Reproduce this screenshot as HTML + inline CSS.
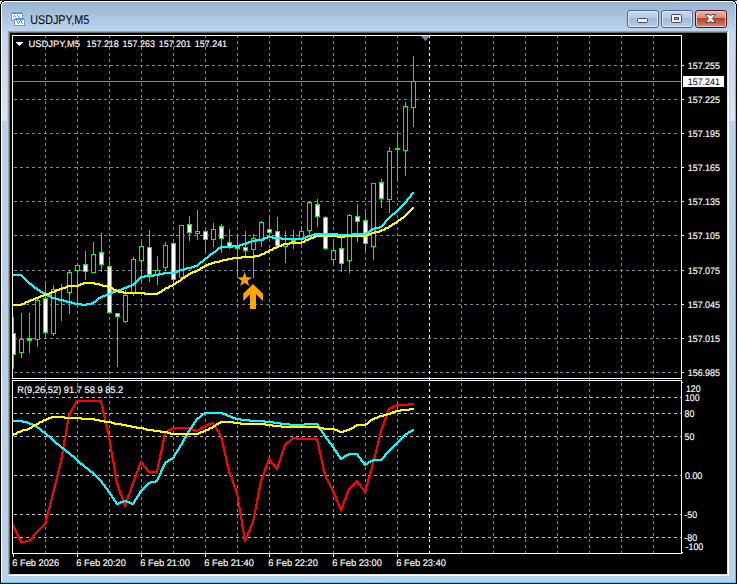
<!DOCTYPE html>
<html lang="en"><head><meta charset="utf-8"><title>USDJPY,M5</title>
<style>html,body{margin:0;padding:0;background:#fff;overflow:hidden}svg{display:block}text{font-family:"Liberation Sans", sans-serif;white-space:pre;text-rendering:geometricPrecision}</style></head><body>
<svg width="739" height="584" viewBox="0 0 739 584">
<defs><linearGradient id="cap" x1="0" y1="0" x2="0" y2="1"><stop offset="0" stop-color="#98b3d1"/><stop offset="1" stop-color="#bdd5ee"/></linearGradient><linearGradient id="side" x1="0" y1="0" x2="0" y2="1"><stop offset="0" stop-color="#c2d7ee"/><stop offset="1" stop-color="#d8e5f4"/></linearGradient><linearGradient id="btnT" x1="0" y1="0" x2="0" y2="1"><stop offset="0" stop-color="#c3d5ea"/><stop offset="1" stop-color="#b7cce5"/></linearGradient><linearGradient id="btnB" x1="0" y1="0" x2="0" y2="1"><stop offset="0" stop-color="#9fb9d7"/><stop offset="1" stop-color="#b4cbe6"/></linearGradient><linearGradient id="clsT" x1="0" y1="0" x2="0" y2="1"><stop offset="0" stop-color="#eaaea1"/><stop offset="1" stop-color="#dc8a79"/></linearGradient><linearGradient id="clsB" x1="0" y1="0" x2="0" y2="1"><stop offset="0" stop-color="#bd3a1e"/><stop offset="1" stop-color="#d4806b"/></linearGradient><linearGradient id="cyl" x1="0" y1="0" x2="0" y2="1"><stop offset="0" stop-color="#c4ecf9"/><stop offset="1" stop-color="#38d4f6"/></linearGradient></defs>
<g shape-rendering="crispEdges">
<rect x="0" y="0" width="737" height="584" fill="#000"/>
<rect x="1" y="1" width="735" height="582" fill="#b9d1ea"/>
<rect x="1" y="1" width="735" height="1" fill="#fff"/>
<rect x="1" y="1" width="1" height="582" fill="#fff"/>
<rect x="735" y="2" width="1" height="581" fill="#38d4f6"/>
<rect x="735" y="4" width="1" height="60" fill="url(#cyl)"/>
<rect x="1" y="582" width="735" height="1" fill="#38d4f6"/>
<rect x="2" y="2" width="733" height="29" fill="url(#cap)"/>
<rect x="2" y="31" width="5" height="90" fill="url(#side)"/>
<rect x="730" y="31" width="5" height="90" fill="url(#side)"/>
<rect x="8" y="31" width="721" height="545" fill="#fff"/>
<rect x="8" y="31" width="720" height="544" fill="#a0a0a0"/>
<rect x="9" y="32" width="719" height="543" fill="#e3e3e3"/>
<rect x="9" y="32" width="718" height="542" fill="#696969"/>
<rect x="10" y="33" width="717" height="541" fill="#000"/>
</g>
<g shape-rendering="crispEdges">
<rect x="0" y="0" width="4" height="1" fill="#2e2e2e"/>
<rect x="0" y="1" width="2" height="1" fill="#e9f0f7"/>
<rect x="2" y="1" width="2" height="1" fill="#101418"/>
<rect x="0" y="2" width="1" height="2" fill="#e9f0f7"/>
<rect x="1" y="2" width="1" height="2" fill="#101418"/>
<rect x="2" y="2" width="2" height="1" fill="#fff"/>
<rect x="2" y="3" width="1" height="1" fill="#fff"/>
<rect x="733" y="0" width="4" height="1" fill="#2e2e2e"/>
<rect x="735" y="1" width="2" height="1" fill="#f4f4f4"/>
<rect x="733" y="1" width="2" height="1" fill="#101418"/>
<rect x="736" y="2" width="1" height="2" fill="#f4f4f4"/>
<rect x="735" y="2" width="1" height="2" fill="#101418"/>
<rect x="733" y="2" width="2" height="1" fill="#d9eef8"/>
<rect x="734" y="3" width="1" height="1" fill="#bfe9f8"/>
</g>
<g shape-rendering="crispEdges">
<rect x="11" y="12" width="12" height="9" fill="#4a86f5"/>
<rect x="12" y="14" width="10" height="6" fill="#fff"/>
<rect x="11" y="12" width="1" height="1" fill="#a9c3e2"/>
<rect x="22" y="12" width="1" height="1" fill="#a9c3e2"/>
<rect x="12" y="12" width="1" height="1" fill="#7fb2f7"/>
<rect x="12" y="20" width="1" height="1" fill="#7fb2f7"/>
<rect x="14" y="12" width="1" height="1" fill="#7fb2f7"/>
<rect x="14" y="20" width="1" height="1" fill="#7fb2f7"/>
<rect x="16" y="12" width="1" height="1" fill="#7fb2f7"/>
<rect x="16" y="20" width="1" height="1" fill="#7fb2f7"/>
<rect x="18" y="12" width="1" height="1" fill="#7fb2f7"/>
<rect x="18" y="20" width="1" height="1" fill="#7fb2f7"/>
<rect x="20" y="12" width="1" height="1" fill="#7fb2f7"/>
<rect x="20" y="20" width="1" height="1" fill="#7fb2f7"/>
<rect x="13" y="13" width="1" height="1" fill="#4fae86"/>
<rect x="16" y="13" width="1" height="1" fill="#4fae86"/>
<rect x="19" y="13" width="1" height="1" fill="#4fae86"/>
<rect x="11" y="14" width="1" height="1" fill="#7fb2f7"/>
<rect x="22" y="14" width="1" height="1" fill="#7fb2f7"/>
<rect x="11" y="16" width="1" height="1" fill="#7fb2f7"/>
<rect x="22" y="16" width="1" height="1" fill="#7fb2f7"/>
<rect x="11" y="18" width="1" height="1" fill="#7fb2f7"/>
<rect x="22" y="18" width="1" height="1" fill="#7fb2f7"/>
<rect x="13" y="16" width="1" height="1" fill="#4a86f5"/>
<rect x="14" y="15" width="1" height="1" fill="#4a86f5"/>
<rect x="15" y="16" width="1" height="1" fill="#4a86f5"/>
<rect x="17" y="15" width="1" height="1" fill="#4a86f5"/>
<rect x="18" y="16" width="1" height="1" fill="#4a86f5"/>
<rect x="19" y="17" width="1" height="1" fill="#4a86f5"/>
<rect x="14" y="18" width="11" height="8" fill="#4a86f5"/>
<rect x="15" y="20" width="9" height="5" fill="#fff"/>
<rect x="14" y="18" width="1" height="1" fill="#a9c3e2"/>
<rect x="24" y="18" width="1" height="1" fill="#a9c3e2"/>
<rect x="15" y="18" width="1" height="1" fill="#7fb2f7"/>
<rect x="15" y="25" width="1" height="1" fill="#7fb2f7"/>
<rect x="17" y="18" width="1" height="1" fill="#7fb2f7"/>
<rect x="17" y="25" width="1" height="1" fill="#7fb2f7"/>
<rect x="19" y="18" width="1" height="1" fill="#7fb2f7"/>
<rect x="19" y="25" width="1" height="1" fill="#7fb2f7"/>
<rect x="21" y="18" width="1" height="1" fill="#7fb2f7"/>
<rect x="21" y="25" width="1" height="1" fill="#7fb2f7"/>
<rect x="23" y="18" width="1" height="1" fill="#7fb2f7"/>
<rect x="23" y="25" width="1" height="1" fill="#7fb2f7"/>
<rect x="16" y="19" width="1" height="1" fill="#4fae86"/>
<rect x="19" y="19" width="1" height="1" fill="#4fae86"/>
<rect x="22" y="19" width="1" height="1" fill="#4fae86"/>
<rect x="14" y="20" width="1" height="1" fill="#7fb2f7"/>
<rect x="24" y="20" width="1" height="1" fill="#7fb2f7"/>
<rect x="14" y="22" width="1" height="1" fill="#7fb2f7"/>
<rect x="24" y="22" width="1" height="1" fill="#7fb2f7"/>
<rect x="14" y="24" width="1" height="1" fill="#7fb2f7"/>
<rect x="24" y="24" width="1" height="1" fill="#7fb2f7"/>
<rect x="16" y="20" width="1" height="1" fill="#4a86f5"/>
<rect x="17" y="21" width="1" height="1" fill="#4a86f5"/>
<rect x="17" y="22" width="1" height="1" fill="#4a86f5"/>
<rect x="18" y="23" width="1" height="1" fill="#4a86f5"/>
<rect x="19" y="22" width="1" height="1" fill="#4a86f5"/>
<rect x="19" y="21" width="1" height="1" fill="#4a86f5"/>
<rect x="20" y="20" width="1" height="1" fill="#4a86f5"/>
<rect x="21" y="21" width="1" height="1" fill="#4a86f5"/>
<rect x="21" y="22" width="1" height="1" fill="#4a86f5"/>
<rect x="22" y="23" width="1" height="1" fill="#4a86f5"/>
</g>
<text x="30.2" y="24" font-size="12.6" fill="#000" textLength="59" lengthAdjust="spacingAndGlyphs">USDJPY,M5</text>
<rect x="627.5" y="10.5" width="31" height="17" rx="2.5" ry="2.5" fill="#dbe7f5" stroke="#56657f" stroke-width="1"/>
<rect x="629" y="12" width="28" height="6" fill="url(#btnT)" shape-rendering="crispEdges"/>
<rect x="629" y="18" width="28" height="8" fill="url(#btnB)" shape-rendering="crispEdges"/>
<rect x="661.5" y="10.5" width="31" height="17" rx="2.5" ry="2.5" fill="#dbe7f5" stroke="#56657f" stroke-width="1"/>
<rect x="663" y="12" width="28" height="6" fill="url(#btnT)" shape-rendering="crispEdges"/>
<rect x="663" y="18" width="28" height="8" fill="url(#btnB)" shape-rendering="crispEdges"/>
<rect x="695.5" y="10.5" width="31" height="17" rx="2.5" ry="2.5" fill="#f3c6bd" stroke="#4b1526" stroke-width="1"/>
<rect x="697" y="12" width="28" height="6" fill="url(#clsT)" shape-rendering="crispEdges"/>
<rect x="697" y="18" width="28" height="8" fill="url(#clsB)" shape-rendering="crispEdges"/>
<rect x="637.5" y="18.5" width="10" height="4" rx="1" fill="#f4f4f4" stroke="#48495a" stroke-width="1"/>
<rect x="671.5" y="14.5" width="10" height="8" rx="1" fill="#f4f4f4" stroke="#48495a" stroke-width="1"/>
<rect x="674.5" y="17.5" width="4" height="2" fill="#9fb9d7" stroke="#48495a" stroke-width="1"/>
<path d="M705.5 14.5h4l1 1.6 1-1.6h4l-3.1 4 3.1 4h-4l-1-1.6-1 1.6h-4l3.1-4z" fill="#f8f8f8" stroke="#48495a" stroke-width="1" stroke-linejoin="round"/>
<g shape-rendering="crispEdges">
<line x1="13" y1="65.5" x2="679" y2="65.5" stroke="#778899" stroke-width="1" stroke-dasharray="3 3" stroke-dashoffset="5"/>
<line x1="13" y1="99.5" x2="679" y2="99.5" stroke="#778899" stroke-width="1" stroke-dasharray="3 3" stroke-dashoffset="5"/>
<line x1="13" y1="133.5" x2="679" y2="133.5" stroke="#778899" stroke-width="1" stroke-dasharray="3 3" stroke-dashoffset="5"/>
<line x1="13" y1="167.5" x2="679" y2="167.5" stroke="#778899" stroke-width="1" stroke-dasharray="3 3" stroke-dashoffset="5"/>
<line x1="13" y1="201.5" x2="679" y2="201.5" stroke="#778899" stroke-width="1" stroke-dasharray="3 3" stroke-dashoffset="5"/>
<line x1="13" y1="235.5" x2="679" y2="235.5" stroke="#778899" stroke-width="1" stroke-dasharray="3 3" stroke-dashoffset="5"/>
<line x1="13" y1="270.5" x2="679" y2="270.5" stroke="#778899" stroke-width="1" stroke-dasharray="3 3" stroke-dashoffset="5"/>
<line x1="13" y1="304.5" x2="679" y2="304.5" stroke="#778899" stroke-width="1" stroke-dasharray="3 3" stroke-dashoffset="5"/>
<line x1="13" y1="338.5" x2="679" y2="338.5" stroke="#778899" stroke-width="1" stroke-dasharray="3 3" stroke-dashoffset="5"/>
<line x1="13" y1="372.5" x2="679" y2="372.5" stroke="#778899" stroke-width="1" stroke-dasharray="3 3" stroke-dashoffset="5"/>
<line x1="13" y1="397.5" x2="681" y2="397.5" stroke="#c0c0c0" stroke-width="1" stroke-dasharray="3 3" stroke-dashoffset="5"/>
<line x1="13" y1="413.5" x2="681" y2="413.5" stroke="#c0c0c0" stroke-width="1" stroke-dasharray="3 3" stroke-dashoffset="5"/>
<line x1="13" y1="436.5" x2="681" y2="436.5" stroke="#c0c0c0" stroke-width="1" stroke-dasharray="3 3" stroke-dashoffset="5"/>
<line x1="13" y1="475.5" x2="681" y2="475.5" stroke="#c0c0c0" stroke-width="1" stroke-dasharray="3 3" stroke-dashoffset="5"/>
<line x1="13" y1="514.5" x2="681" y2="514.5" stroke="#c0c0c0" stroke-width="1" stroke-dasharray="3 3" stroke-dashoffset="5"/>
<line x1="13" y1="537.5" x2="681" y2="537.5" stroke="#c0c0c0" stroke-width="1" stroke-dasharray="3 3" stroke-dashoffset="5"/>
<rect x="12" y="35" width="670" height="1" fill="#fff"/>
<rect x="12" y="378" width="670" height="1" fill="#fff"/>
<rect x="12" y="35" width="1" height="344" fill="#fff"/>
<rect x="681" y="35" width="1" height="344" fill="#fff"/>
<rect x="12" y="380" width="670" height="1" fill="#fff"/>
<rect x="12" y="553" width="670" height="1" fill="#fff"/>
<rect x="12" y="380" width="1" height="174" fill="#fff"/>
<rect x="681" y="380" width="1" height="174" fill="#fff"/>
<line x1="45.5" y1="36" x2="45.5" y2="380" stroke="#778899" stroke-width="1" stroke-dasharray="3 3" stroke-dashoffset="1"/>
<line x1="45.5" y1="381" x2="45.5" y2="553" stroke="#778899" stroke-width="1" stroke-dasharray="3 3" stroke-dashoffset="4"/>
<line x1="77.5" y1="36" x2="77.5" y2="380" stroke="#778899" stroke-width="1" stroke-dasharray="3 3" stroke-dashoffset="1"/>
<line x1="77.5" y1="381" x2="77.5" y2="553" stroke="#778899" stroke-width="1" stroke-dasharray="3 3" stroke-dashoffset="4"/>
<line x1="109.5" y1="36" x2="109.5" y2="380" stroke="#778899" stroke-width="1" stroke-dasharray="3 3" stroke-dashoffset="1"/>
<line x1="109.5" y1="381" x2="109.5" y2="553" stroke="#778899" stroke-width="1" stroke-dasharray="3 3" stroke-dashoffset="4"/>
<line x1="141.5" y1="36" x2="141.5" y2="380" stroke="#778899" stroke-width="1" stroke-dasharray="3 3" stroke-dashoffset="1"/>
<line x1="141.5" y1="381" x2="141.5" y2="553" stroke="#778899" stroke-width="1" stroke-dasharray="3 3" stroke-dashoffset="4"/>
<line x1="173.5" y1="36" x2="173.5" y2="380" stroke="#778899" stroke-width="1" stroke-dasharray="3 3" stroke-dashoffset="1"/>
<line x1="173.5" y1="381" x2="173.5" y2="553" stroke="#778899" stroke-width="1" stroke-dasharray="3 3" stroke-dashoffset="4"/>
<line x1="205.5" y1="36" x2="205.5" y2="380" stroke="#778899" stroke-width="1" stroke-dasharray="3 3" stroke-dashoffset="1"/>
<line x1="205.5" y1="381" x2="205.5" y2="553" stroke="#778899" stroke-width="1" stroke-dasharray="3 3" stroke-dashoffset="4"/>
<line x1="237.5" y1="36" x2="237.5" y2="380" stroke="#778899" stroke-width="1" stroke-dasharray="3 3" stroke-dashoffset="1"/>
<line x1="237.5" y1="381" x2="237.5" y2="553" stroke="#778899" stroke-width="1" stroke-dasharray="3 3" stroke-dashoffset="4"/>
<line x1="269.5" y1="36" x2="269.5" y2="380" stroke="#778899" stroke-width="1" stroke-dasharray="3 3" stroke-dashoffset="1"/>
<line x1="269.5" y1="381" x2="269.5" y2="553" stroke="#778899" stroke-width="1" stroke-dasharray="3 3" stroke-dashoffset="4"/>
<line x1="301.5" y1="36" x2="301.5" y2="380" stroke="#778899" stroke-width="1" stroke-dasharray="3 3" stroke-dashoffset="1"/>
<line x1="301.5" y1="381" x2="301.5" y2="553" stroke="#778899" stroke-width="1" stroke-dasharray="3 3" stroke-dashoffset="4"/>
<line x1="333.5" y1="36" x2="333.5" y2="380" stroke="#778899" stroke-width="1" stroke-dasharray="3 3" stroke-dashoffset="1"/>
<line x1="333.5" y1="381" x2="333.5" y2="553" stroke="#778899" stroke-width="1" stroke-dasharray="3 3" stroke-dashoffset="4"/>
<line x1="365.5" y1="36" x2="365.5" y2="380" stroke="#778899" stroke-width="1" stroke-dasharray="3 3" stroke-dashoffset="1"/>
<line x1="365.5" y1="381" x2="365.5" y2="553" stroke="#778899" stroke-width="1" stroke-dasharray="3 3" stroke-dashoffset="4"/>
<line x1="397.5" y1="36" x2="397.5" y2="380" stroke="#778899" stroke-width="1" stroke-dasharray="3 3" stroke-dashoffset="1"/>
<line x1="397.5" y1="381" x2="397.5" y2="553" stroke="#778899" stroke-width="1" stroke-dasharray="3 3" stroke-dashoffset="4"/>
<line x1="429.5" y1="36" x2="429.5" y2="380" stroke="#fff" stroke-width="1" stroke-dasharray="3 3" stroke-dashoffset="1"/>
<line x1="429.5" y1="381" x2="429.5" y2="553" stroke="#fff" stroke-width="1" stroke-dasharray="3 3" stroke-dashoffset="4"/>
<line x1="461.5" y1="36" x2="461.5" y2="380" stroke="#778899" stroke-width="1" stroke-dasharray="3 3" stroke-dashoffset="1"/>
<line x1="461.5" y1="381" x2="461.5" y2="553" stroke="#778899" stroke-width="1" stroke-dasharray="3 3" stroke-dashoffset="4"/>
<line x1="493.5" y1="36" x2="493.5" y2="380" stroke="#778899" stroke-width="1" stroke-dasharray="3 3" stroke-dashoffset="1"/>
<line x1="493.5" y1="381" x2="493.5" y2="553" stroke="#778899" stroke-width="1" stroke-dasharray="3 3" stroke-dashoffset="4"/>
<line x1="525.5" y1="36" x2="525.5" y2="380" stroke="#778899" stroke-width="1" stroke-dasharray="3 3" stroke-dashoffset="1"/>
<line x1="525.5" y1="381" x2="525.5" y2="553" stroke="#778899" stroke-width="1" stroke-dasharray="3 3" stroke-dashoffset="4"/>
<line x1="557.5" y1="36" x2="557.5" y2="380" stroke="#778899" stroke-width="1" stroke-dasharray="3 3" stroke-dashoffset="1"/>
<line x1="557.5" y1="381" x2="557.5" y2="553" stroke="#778899" stroke-width="1" stroke-dasharray="3 3" stroke-dashoffset="4"/>
<line x1="589.5" y1="36" x2="589.5" y2="380" stroke="#778899" stroke-width="1" stroke-dasharray="3 3" stroke-dashoffset="1"/>
<line x1="589.5" y1="381" x2="589.5" y2="553" stroke="#778899" stroke-width="1" stroke-dasharray="3 3" stroke-dashoffset="4"/>
<line x1="621.5" y1="36" x2="621.5" y2="380" stroke="#778899" stroke-width="1" stroke-dasharray="3 3" stroke-dashoffset="1"/>
<line x1="621.5" y1="381" x2="621.5" y2="553" stroke="#778899" stroke-width="1" stroke-dasharray="3 3" stroke-dashoffset="4"/>
<line x1="653.5" y1="36" x2="653.5" y2="380" stroke="#778899" stroke-width="1" stroke-dasharray="3 3" stroke-dashoffset="1"/>
<line x1="653.5" y1="381" x2="653.5" y2="553" stroke="#778899" stroke-width="1" stroke-dasharray="3 3" stroke-dashoffset="4"/>
<rect x="13" y="81" width="668" height="1" fill="#7b8a9b"/>
<rect x="682" y="65" width="2" height="1" fill="#fff"/>
<rect x="682" y="99" width="2" height="1" fill="#fff"/>
<rect x="682" y="133" width="2" height="1" fill="#fff"/>
<rect x="682" y="167" width="2" height="1" fill="#fff"/>
<rect x="682" y="201" width="2" height="1" fill="#fff"/>
<rect x="682" y="235" width="2" height="1" fill="#fff"/>
<rect x="682" y="270" width="2" height="1" fill="#fff"/>
<rect x="682" y="304" width="2" height="1" fill="#fff"/>
<rect x="682" y="338" width="2" height="1" fill="#fff"/>
<rect x="682" y="372" width="2" height="1" fill="#fff"/>
<rect x="682" y="382" width="1" height="1" fill="#fff"/>
<rect x="682" y="552" width="1" height="1" fill="#fff"/>
<rect x="13" y="554" width="1" height="3" fill="#fff"/>
<rect x="77" y="554" width="1" height="3" fill="#fff"/>
<rect x="141" y="554" width="1" height="3" fill="#fff"/>
<rect x="205" y="554" width="1" height="3" fill="#fff"/>
<rect x="269" y="554" width="1" height="3" fill="#fff"/>
<rect x="333" y="554" width="1" height="3" fill="#fff"/>
<rect x="397" y="554" width="1" height="3" fill="#fff"/>
</g>
<path d="M421 36h9l-4.5 5z" fill="#778899"/>
<g shape-rendering="crispEdges">
<rect x="13" y="317" width="1" height="52" fill="#00ff00"/>
<rect x="13" y="333" width="3" height="22" fill="#00ff00"/>
<rect x="13" y="334" width="2" height="20" fill="#fff"/>
<rect x="21" y="313" width="1" height="45" fill="#00ff00"/>
<rect x="19" y="339" width="5" height="14" fill="#00ff00"/>
<rect x="20" y="340" width="3" height="12" fill="#000"/>
<rect x="29" y="313" width="1" height="40" fill="#00ff00"/>
<rect x="27" y="338" width="5" height="3" fill="#00ff00"/>
<rect x="28" y="339" width="3" height="1" fill="#fff"/>
<rect x="37" y="299" width="1" height="48" fill="#00ff00"/>
<rect x="35" y="300" width="5" height="40" fill="#00ff00"/>
<rect x="36" y="301" width="3" height="38" fill="#000"/>
<rect x="45" y="284" width="1" height="51" fill="#00ff00"/>
<rect x="43" y="298" width="5" height="35" fill="#00ff00"/>
<rect x="44" y="299" width="3" height="33" fill="#fff"/>
<rect x="53" y="285" width="1" height="51" fill="#00ff00"/>
<rect x="51" y="289" width="5" height="45" fill="#00ff00"/>
<rect x="52" y="290" width="3" height="43" fill="#000"/>
<rect x="61" y="284" width="1" height="37" fill="#00ff00"/>
<rect x="69" y="271" width="1" height="43" fill="#00ff00"/>
<rect x="67" y="272" width="5" height="21" fill="#00ff00"/>
<rect x="68" y="273" width="3" height="19" fill="#000"/>
<rect x="77" y="263" width="1" height="42" fill="#00ff00"/>
<rect x="75" y="265" width="5" height="6" fill="#00ff00"/>
<rect x="76" y="266" width="3" height="4" fill="#000"/>
<rect x="85" y="251" width="1" height="29" fill="#00ff00"/>
<rect x="83" y="264" width="5" height="8" fill="#00ff00"/>
<rect x="84" y="265" width="3" height="6" fill="#fff"/>
<rect x="93" y="242" width="1" height="31" fill="#00ff00"/>
<rect x="91" y="254" width="5" height="19" fill="#00ff00"/>
<rect x="92" y="255" width="3" height="17" fill="#000"/>
<rect x="101" y="233" width="1" height="39" fill="#00ff00"/>
<rect x="99" y="252" width="5" height="13" fill="#00ff00"/>
<rect x="100" y="253" width="3" height="11" fill="#fff"/>
<rect x="109" y="257" width="1" height="56" fill="#00ff00"/>
<rect x="107" y="266" width="5" height="47" fill="#00ff00"/>
<rect x="108" y="267" width="3" height="45" fill="#fff"/>
<rect x="117" y="313" width="1" height="54" fill="#00ff00"/>
<rect x="115" y="313" width="5" height="4" fill="#00ff00"/>
<rect x="116" y="314" width="3" height="2" fill="#fff"/>
<rect x="125" y="290" width="1" height="33" fill="#00ff00"/>
<rect x="123" y="295" width="5" height="27" fill="#00ff00"/>
<rect x="124" y="296" width="3" height="25" fill="#000"/>
<rect x="133" y="257" width="1" height="39" fill="#00ff00"/>
<rect x="131" y="259" width="5" height="35" fill="#00ff00"/>
<rect x="132" y="260" width="3" height="33" fill="#000"/>
<rect x="141" y="242" width="1" height="40" fill="#00ff00"/>
<rect x="139" y="246" width="5" height="15" fill="#00ff00"/>
<rect x="140" y="247" width="3" height="13" fill="#000"/>
<rect x="149" y="230" width="1" height="52" fill="#00ff00"/>
<rect x="147" y="247" width="5" height="28" fill="#00ff00"/>
<rect x="148" y="248" width="3" height="26" fill="#fff"/>
<rect x="157" y="256" width="1" height="29" fill="#00ff00"/>
<rect x="155" y="270" width="5" height="6" fill="#00ff00"/>
<rect x="156" y="271" width="3" height="4" fill="#000"/>
<rect x="165" y="242" width="1" height="28" fill="#00ff00"/>
<rect x="163" y="245" width="5" height="23" fill="#00ff00"/>
<rect x="164" y="246" width="3" height="21" fill="#000"/>
<rect x="173" y="242" width="1" height="41" fill="#00ff00"/>
<rect x="171" y="243" width="5" height="37" fill="#00ff00"/>
<rect x="172" y="244" width="3" height="35" fill="#fff"/>
<rect x="181" y="225" width="1" height="54" fill="#00ff00"/>
<rect x="179" y="225" width="5" height="53" fill="#00ff00"/>
<rect x="180" y="226" width="3" height="51" fill="#000"/>
<rect x="189" y="216" width="1" height="25" fill="#00ff00"/>
<rect x="187" y="224" width="5" height="9" fill="#00ff00"/>
<rect x="188" y="225" width="3" height="7" fill="#fff"/>
<rect x="197" y="210" width="1" height="30" fill="#00ff00"/>
<rect x="195" y="231" width="5" height="3" fill="#00ff00"/>
<rect x="196" y="232" width="3" height="1" fill="#000"/>
<rect x="205" y="229" width="1" height="23" fill="#00ff00"/>
<rect x="203" y="231" width="5" height="9" fill="#00ff00"/>
<rect x="204" y="232" width="3" height="7" fill="#fff"/>
<rect x="213" y="223" width="1" height="24" fill="#00ff00"/>
<rect x="211" y="229" width="5" height="11" fill="#00ff00"/>
<rect x="212" y="230" width="3" height="9" fill="#000"/>
<rect x="221" y="224" width="1" height="29" fill="#00ff00"/>
<rect x="219" y="226" width="5" height="13" fill="#00ff00"/>
<rect x="220" y="227" width="3" height="11" fill="#fff"/>
<rect x="229" y="229" width="1" height="20" fill="#00ff00"/>
<rect x="227" y="242" width="5" height="5" fill="#00ff00"/>
<rect x="228" y="243" width="3" height="3" fill="#fff"/>
<rect x="237" y="235" width="1" height="43" fill="#00ff00"/>
<rect x="235" y="246" width="5" height="3" fill="#00ff00"/>
<rect x="236" y="247" width="3" height="1" fill="#fff"/>
<rect x="245" y="231" width="1" height="26" fill="#00ff00"/>
<rect x="243" y="247" width="5" height="4" fill="#00ff00"/>
<rect x="244" y="248" width="3" height="2" fill="#fff"/>
<rect x="253" y="234" width="1" height="44" fill="#00ff00"/>
<rect x="251" y="238" width="5" height="12" fill="#00ff00"/>
<rect x="252" y="239" width="3" height="10" fill="#000"/>
<rect x="261" y="221" width="1" height="26" fill="#00ff00"/>
<rect x="259" y="222" width="5" height="19" fill="#00ff00"/>
<rect x="260" y="223" width="3" height="17" fill="#000"/>
<rect x="269" y="216" width="1" height="20" fill="#00ff00"/>
<rect x="267" y="229" width="5" height="4" fill="#00ff00"/>
<rect x="268" y="230" width="3" height="2" fill="#fff"/>
<rect x="277" y="217" width="1" height="30" fill="#00ff00"/>
<rect x="275" y="231" width="5" height="15" fill="#00ff00"/>
<rect x="276" y="232" width="3" height="13" fill="#fff"/>
<rect x="285" y="231" width="1" height="32" fill="#00ff00"/>
<rect x="283" y="243" width="5" height="4" fill="#00ff00"/>
<rect x="284" y="244" width="3" height="2" fill="#000"/>
<rect x="293" y="230" width="1" height="19" fill="#00ff00"/>
<rect x="291" y="240" width="5" height="3" fill="#00ff00"/>
<rect x="292" y="241" width="3" height="1" fill="#fff"/>
<rect x="301" y="226" width="1" height="22" fill="#00ff00"/>
<rect x="299" y="231" width="5" height="9" fill="#00ff00"/>
<rect x="300" y="232" width="3" height="7" fill="#000"/>
<rect x="309" y="201" width="1" height="34" fill="#00ff00"/>
<rect x="307" y="202" width="5" height="29" fill="#00ff00"/>
<rect x="308" y="203" width="3" height="27" fill="#000"/>
<rect x="317" y="199" width="1" height="28" fill="#00ff00"/>
<rect x="315" y="204" width="5" height="13" fill="#00ff00"/>
<rect x="316" y="205" width="3" height="11" fill="#fff"/>
<rect x="325" y="216" width="1" height="34" fill="#00ff00"/>
<rect x="323" y="217" width="5" height="32" fill="#00ff00"/>
<rect x="324" y="218" width="3" height="30" fill="#fff"/>
<rect x="333" y="239" width="1" height="25" fill="#00ff00"/>
<rect x="331" y="250" width="5" height="10" fill="#00ff00"/>
<rect x="332" y="251" width="3" height="8" fill="#000"/>
<rect x="341" y="238" width="1" height="34" fill="#00ff00"/>
<rect x="339" y="248" width="5" height="16" fill="#00ff00"/>
<rect x="340" y="249" width="3" height="14" fill="#fff"/>
<rect x="349" y="214" width="1" height="59" fill="#00ff00"/>
<rect x="347" y="215" width="5" height="46" fill="#00ff00"/>
<rect x="348" y="216" width="3" height="44" fill="#000"/>
<rect x="357" y="204" width="1" height="38" fill="#00ff00"/>
<rect x="355" y="216" width="5" height="6" fill="#00ff00"/>
<rect x="356" y="217" width="3" height="4" fill="#fff"/>
<rect x="365" y="212" width="1" height="39" fill="#00ff00"/>
<rect x="363" y="220" width="5" height="24" fill="#00ff00"/>
<rect x="364" y="221" width="3" height="22" fill="#fff"/>
<rect x="373" y="183" width="1" height="77" fill="#00ff00"/>
<rect x="371" y="183" width="5" height="64" fill="#00ff00"/>
<rect x="372" y="184" width="3" height="62" fill="#000"/>
<rect x="381" y="179" width="1" height="29" fill="#00ff00"/>
<rect x="379" y="182" width="5" height="17" fill="#00ff00"/>
<rect x="380" y="183" width="3" height="15" fill="#fff"/>
<rect x="389" y="147" width="1" height="66" fill="#00ff00"/>
<rect x="387" y="151" width="5" height="49" fill="#00ff00"/>
<rect x="388" y="152" width="3" height="47" fill="#000"/>
<rect x="397" y="133" width="1" height="48" fill="#00ff00"/>
<rect x="395" y="148" width="5" height="2" fill="#00ff00"/>
<rect x="405" y="102" width="1" height="74" fill="#00ff00"/>
<rect x="403" y="106" width="5" height="45" fill="#00ff00"/>
<rect x="404" y="107" width="3" height="43" fill="#000"/>
<rect x="413" y="56" width="1" height="71" fill="#00ff00"/>
<rect x="411" y="81" width="5" height="27" fill="#00ff00"/>
<rect x="412" y="82" width="3" height="25" fill="#000"/>
</g>
<path d="M412 192h2v1h-2zM411 193h3v1h-3zM410 194h3v1h-3zM410 195h2v1h-2zM409 196h3v1h-3zM408 197h3v1h-3zM407 198h3v1h-3zM406 199h3v1h-3zM406 200h2v1h-2zM405 201h3v1h-3zM404 202h3v1h-3zM403 203h3v1h-3zM402 204h3v1h-3zM401 205h3v1h-3zM400 206h3v1h-3zM399 207h3v1h-3zM398 208h3v1h-3zM397 209h3v1h-3zM396 210h3v1h-3zM395 211h3v1h-3zM394 212h3v1h-3zM392 213h4v1h-4zM391 214h4v1h-4zM390 215h3v1h-3zM389 216h3v1h-3zM388 217h3v1h-3zM387 218h3v1h-3zM386 219h3v1h-3zM385 220h3v1h-3zM384 221h3v1h-3zM384 222h2v1h-2zM383 223h3v1h-3zM382 224h3v1h-3zM381 225h3v1h-3zM379 226h4v1h-4zM374 227h8v1h-8zM372 228h8v1h-8zM370 229h5v1h-5zM369 230h4v1h-4zM367 231h4v1h-4zM365 232h5v1h-5zM314 233h24v1h-24zM352 233h16v1h-16zM311 234h55v1h-55zM307 235h8v1h-8zM337 235h16v1h-16zM267 236h6v1h-6zM305 236h7v1h-7zM264 237h18v1h-18zM302 237h6v1h-6zM262 238h6v1h-6zM272 238h34v1h-34zM256 239h9v1h-9zM281 239h22v1h-22zM251 240h12v1h-12zM248 241h9v1h-9zM246 242h6v1h-6zM242 243h7v1h-7zM239 244h8v1h-8zM232 245h11v1h-11zM220 246h20v1h-20zM218 247h15v1h-15zM217 248h4v1h-4zM216 249h3v1h-3zM215 250h3v1h-3zM213 251h4v1h-4zM212 252h4v1h-4zM210 253h4v1h-4zM209 254h4v1h-4zM208 255h3v1h-3zM207 256h3v1h-3zM205 257h4v1h-4zM204 258h4v1h-4zM203 259h3v1h-3zM202 260h3v1h-3zM200 261h4v1h-4zM199 262h4v1h-4zM198 263h3v1h-3zM197 264h3v1h-3zM194 265h5v1h-5zM191 266h7v1h-7zM186 267h9v1h-9zM183 268h9v1h-9zM179 269h8v1h-8zM177 270h7v1h-7zM174 271h6v1h-6zM163 272h15v1h-15zM158 273h17v1h-17zM13 274h9v1h-9zM153 274h11v1h-11zM13 275h10v1h-10zM144 275h15v1h-15zM21 276h3v1h-3zM140 276h14v1h-14zM22 277h3v1h-3zM139 277h6v1h-6zM23 278h3v1h-3zM138 278h3v1h-3zM24 279h3v1h-3zM137 279h3v1h-3zM25 280h3v1h-3zM136 280h3v1h-3zM26 281h3v1h-3zM135 281h3v1h-3zM27 282h3v1h-3zM134 282h3v1h-3zM28 283h4v1h-4zM133 283h3v1h-3zM29 284h4v1h-4zM131 284h4v1h-4zM31 285h3v1h-3zM128 285h6v1h-6zM32 286h3v1h-3zM126 286h6v1h-6zM33 287h4v1h-4zM123 287h6v1h-6zM34 288h4v1h-4zM121 288h6v1h-6zM36 289h4v1h-4zM118 289h6v1h-6zM37 290h4v1h-4zM115 290h7v1h-7zM39 291h4v1h-4zM112 291h7v1h-7zM40 292h5v1h-5zM110 292h6v1h-6zM42 293h5v1h-5zM107 293h6v1h-6zM44 294h4v1h-4zM105 294h6v1h-6zM46 295h5v1h-5zM102 295h6v1h-6zM47 296h5v1h-5zM100 296h6v1h-6zM50 297h6v1h-6zM98 297h5v1h-5zM51 298h8v1h-8zM97 298h4v1h-4zM55 299h9v1h-9zM96 299h3v1h-3zM58 300h9v1h-9zM95 300h3v1h-3zM63 301h9v1h-9zM93 301h4v1h-4zM66 302h9v1h-9zM91 302h5v1h-5zM71 303h11v1h-11zM86 303h8v1h-8zM74 304h18v1h-18zM81 305h6v1h-6z" fill="#00ffff" shape-rendering="crispEdges"/>
<path d="M412 207h2v1h-2zM411 208h3v1h-3zM410 209h3v1h-3zM409 210h3v1h-3zM408 211h3v1h-3zM407 212h3v1h-3zM406 213h3v1h-3zM405 214h3v1h-3zM404 215h3v1h-3zM403 216h3v1h-3zM401 217h4v1h-4zM400 218h4v1h-4zM398 219h4v1h-4zM397 220h4v1h-4zM396 221h3v1h-3zM394 222h4v1h-4zM392 223h5v1h-5zM391 224h4v1h-4zM389 225h4v1h-4zM388 226h4v1h-4zM385 227h5v1h-5zM384 228h5v1h-5zM381 229h5v1h-5zM379 230h6v1h-6zM374 231h8v1h-8zM371 232h9v1h-9zM368 233h7v1h-7zM366 234h6v1h-6zM315 235h23v1h-23zM344 235h25v1h-25zM313 236h54v1h-54zM310 237h6v1h-6zM337 237h8v1h-8zM308 238h6v1h-6zM305 239h6v1h-6zM304 240h5v1h-5zM301 241h5v1h-5zM289 242h16v1h-16zM283 243h19v1h-19zM281 244h9v1h-9zM278 245h6v1h-6zM276 246h6v1h-6zM273 247h6v1h-6zM272 248h5v1h-5zM269 249h5v1h-5zM268 250h5v1h-5zM265 251h5v1h-5zM264 252h5v1h-5zM261 253h5v1h-5zM259 254h6v1h-6zM254 255h8v1h-8zM241 256h19v1h-19zM232 257h23v1h-23zM227 258h15v1h-15zM222 259h11v1h-11zM219 260h9v1h-9zM214 261h9v1h-9zM211 262h9v1h-9zM208 263h7v1h-7zM206 264h6v1h-6zM204 265h5v1h-5zM202 266h5v1h-5zM200 267h5v1h-5zM199 268h4v1h-4zM197 269h4v1h-4zM195 270h5v1h-5zM192 271h6v1h-6zM190 272h6v1h-6zM188 273h5v1h-5zM187 274h4v1h-4zM185 275h4v1h-4zM184 276h4v1h-4zM182 277h4v1h-4zM181 278h4v1h-4zM180 279h3v1h-3zM178 280h4v1h-4zM176 281h5v1h-5zM83 282h12v1h-12zM175 282h4v1h-4zM80 283h20v1h-20zM173 283h4v1h-4zM78 284h6v1h-6zM94 284h9v1h-9zM172 284h4v1h-4zM67 285h14v1h-14zM99 285h9v1h-9zM169 285h5v1h-5zM65 286h14v1h-14zM102 286h8v1h-8zM168 286h5v1h-5zM62 287h6v1h-6zM107 287h6v1h-6zM165 287h5v1h-5zM59 288h7v1h-7zM109 288h5v1h-5zM164 288h5v1h-5zM56 289h7v1h-7zM112 289h5v1h-5zM162 289h4v1h-4zM54 290h6v1h-6zM113 290h6v1h-6zM161 290h4v1h-4zM51 291h6v1h-6zM116 291h8v1h-8zM159 291h4v1h-4zM49 292h6v1h-6zM118 292h27v1h-27zM157 292h5v1h-5zM46 293h6v1h-6zM123 293h37v1h-37zM43 294h7v1h-7zM144 294h14v1h-14zM40 295h7v1h-7zM38 296h6v1h-6zM35 297h6v1h-6zM33 298h6v1h-6zM30 299h6v1h-6zM28 300h6v1h-6zM25 301h6v1h-6zM24 302h5v1h-5zM21 303h5v1h-5zM13 304h12v1h-12zM13 305h9v1h-9z" fill="#ffff00" shape-rendering="crispEdges"/>
<path d="M76 400h26v1h-26zM75 401h27v1h-27zM75 402h2v1h-2zM100 402h2v1h-2zM74 403h3v1h-3zM100 403h3v1h-3zM408 403h6v1h-6zM74 404h2v1h-2zM101 404h2v1h-2zM396 404h18v1h-18zM73 405h3v1h-3zM101 405h2v1h-2zM393 405h16v1h-16zM73 406h2v1h-2zM101 406h2v1h-2zM392 406h5v1h-5zM72 407h3v1h-3zM101 407h3v1h-3zM389 407h5v1h-5zM71 408h3v1h-3zM102 408h2v1h-2zM388 408h5v1h-5zM71 409h2v1h-2zM102 409h2v1h-2zM388 409h2v1h-2zM70 410h3v1h-3zM102 410h2v1h-2zM387 410h3v1h-3zM70 411h2v1h-2zM102 411h2v1h-2zM387 411h2v1h-2zM69 412h3v1h-3zM102 412h3v1h-3zM387 412h2v1h-2zM69 413h2v1h-2zM103 413h2v1h-2zM386 413h3v1h-3zM68 414h3v1h-3zM103 414h2v1h-2zM386 414h2v1h-2zM68 415h2v1h-2zM103 415h2v1h-2zM385 415h3v1h-3zM68 416h2v1h-2zM103 416h3v1h-3zM385 416h2v1h-2zM67 417h3v1h-3zM104 417h2v1h-2zM385 417h2v1h-2zM67 418h2v1h-2zM104 418h2v1h-2zM384 418h3v1h-3zM67 419h2v1h-2zM104 419h2v1h-2zM384 419h2v1h-2zM67 420h2v1h-2zM104 420h2v1h-2zM384 420h2v1h-2zM67 421h2v1h-2zM104 421h3v1h-3zM383 421h3v1h-3zM67 422h2v1h-2zM105 422h2v1h-2zM211 422h3v1h-3zM383 422h2v1h-2zM66 423h3v1h-3zM105 423h2v1h-2zM208 423h7v1h-7zM383 423h2v1h-2zM66 424h2v1h-2zM105 424h2v1h-2zM206 424h6v1h-6zM213 424h2v1h-2zM382 424h3v1h-3zM66 425h2v1h-2zM105 425h3v1h-3zM204 425h5v1h-5zM213 425h3v1h-3zM382 425h2v1h-2zM66 426h2v1h-2zM106 426h2v1h-2zM202 426h5v1h-5zM214 426h2v1h-2zM381 426h3v1h-3zM66 427h2v1h-2zM106 427h2v1h-2zM172 427h19v1h-19zM200 427h5v1h-5zM214 427h3v1h-3zM381 427h2v1h-2zM66 428h2v1h-2zM106 428h2v1h-2zM170 428h23v1h-23zM199 428h4v1h-4zM215 428h3v1h-3zM381 428h2v1h-2zM65 429h3v1h-3zM106 429h2v1h-2zM168 429h5v1h-5zM190 429h6v1h-6zM197 429h4v1h-4zM216 429h2v1h-2zM380 429h3v1h-3zM65 430h2v1h-2zM106 430h3v1h-3zM167 430h4v1h-4zM192 430h8v1h-8zM216 430h3v1h-3zM380 430h2v1h-2zM65 431h2v1h-2zM107 431h2v1h-2zM165 431h4v1h-4zM195 431h3v1h-3zM217 431h3v1h-3zM380 431h2v1h-2zM65 432h2v1h-2zM107 432h2v1h-2zM164 432h4v1h-4zM218 432h2v1h-2zM380 432h2v1h-2zM65 433h2v1h-2zM107 433h2v1h-2zM164 433h2v1h-2zM218 433h3v1h-3zM379 433h3v1h-3zM65 434h2v1h-2zM107 434h3v1h-3zM164 434h2v1h-2zM219 434h2v1h-2zM379 434h2v1h-2zM64 435h3v1h-3zM108 435h2v1h-2zM163 435h3v1h-3zM219 435h3v1h-3zM379 435h2v1h-2zM64 436h2v1h-2zM108 436h2v1h-2zM163 436h2v1h-2zM220 436h2v1h-2zM379 436h2v1h-2zM64 437h2v1h-2zM108 437h2v1h-2zM163 437h2v1h-2zM220 437h2v1h-2zM292 437h6v1h-6zM378 437h3v1h-3zM64 438h2v1h-2zM108 438h2v1h-2zM163 438h2v1h-2zM220 438h3v1h-3zM291 438h27v1h-27zM378 438h2v1h-2zM64 439h2v1h-2zM108 439h3v1h-3zM163 439h2v1h-2zM221 439h2v1h-2zM290 439h3v1h-3zM297 439h21v1h-21zM378 439h2v1h-2zM63 440h3v1h-3zM109 440h2v1h-2zM162 440h3v1h-3zM221 440h2v1h-2zM289 440h3v1h-3zM316 440h2v1h-2zM378 440h2v1h-2zM63 441h2v1h-2zM109 441h2v1h-2zM162 441h2v1h-2zM221 441h2v1h-2zM287 441h4v1h-4zM316 441h3v1h-3zM377 441h3v1h-3zM63 442h2v1h-2zM109 442h2v1h-2zM162 442h2v1h-2zM221 442h3v1h-3zM286 442h4v1h-4zM317 442h2v1h-2zM377 442h2v1h-2zM63 443h2v1h-2zM109 443h2v1h-2zM162 443h2v1h-2zM222 443h2v1h-2zM285 443h3v1h-3zM317 443h2v1h-2zM377 443h2v1h-2zM63 444h2v1h-2zM109 444h2v1h-2zM162 444h2v1h-2zM222 444h2v1h-2zM284 444h3v1h-3zM317 444h2v1h-2zM377 444h2v1h-2zM63 445h2v1h-2zM109 445h3v1h-3zM161 445h3v1h-3zM222 445h2v1h-2zM284 445h2v1h-2zM317 445h3v1h-3zM376 445h3v1h-3zM62 446h3v1h-3zM110 446h2v1h-2zM161 446h2v1h-2zM222 446h3v1h-3zM283 446h3v1h-3zM318 446h2v1h-2zM376 446h2v1h-2zM62 447h2v1h-2zM110 447h2v1h-2zM161 447h2v1h-2zM223 447h2v1h-2zM283 447h2v1h-2zM318 447h2v1h-2zM376 447h2v1h-2zM62 448h2v1h-2zM110 448h2v1h-2zM161 448h2v1h-2zM223 448h2v1h-2zM283 448h2v1h-2zM318 448h2v1h-2zM376 448h2v1h-2zM62 449h2v1h-2zM110 449h2v1h-2zM161 449h2v1h-2zM223 449h2v1h-2zM282 449h3v1h-3zM318 449h2v1h-2zM375 449h3v1h-3zM62 450h2v1h-2zM110 450h2v1h-2zM160 450h3v1h-3zM223 450h2v1h-2zM282 450h2v1h-2zM318 450h3v1h-3zM375 450h2v1h-2zM62 451h2v1h-2zM110 451h3v1h-3zM160 451h2v1h-2zM223 451h3v1h-3zM282 451h2v1h-2zM319 451h2v1h-2zM375 451h2v1h-2zM61 452h3v1h-3zM111 452h2v1h-2zM160 452h2v1h-2zM224 452h2v1h-2zM281 452h3v1h-3zM319 452h2v1h-2zM375 452h2v1h-2zM61 453h2v1h-2zM111 453h2v1h-2zM160 453h2v1h-2zM224 453h2v1h-2zM281 453h2v1h-2zM319 453h2v1h-2zM374 453h3v1h-3zM61 454h2v1h-2zM111 454h2v1h-2zM159 454h3v1h-3zM224 454h2v1h-2zM281 454h2v1h-2zM319 454h3v1h-3zM374 454h2v1h-2zM61 455h2v1h-2zM111 455h2v1h-2zM159 455h2v1h-2zM224 455h3v1h-3zM280 455h3v1h-3zM320 455h2v1h-2zM374 455h2v1h-2zM61 456h2v1h-2zM111 456h2v1h-2zM159 456h2v1h-2zM225 456h2v1h-2zM280 456h2v1h-2zM320 456h2v1h-2zM374 456h2v1h-2zM61 457h2v1h-2zM111 457h3v1h-3zM159 457h2v1h-2zM225 457h2v1h-2zM280 457h2v1h-2zM320 457h2v1h-2zM373 457h3v1h-3zM60 458h3v1h-3zM112 458h2v1h-2zM159 458h2v1h-2zM225 458h2v1h-2zM268 458h2v1h-2zM279 458h3v1h-3zM320 458h2v1h-2zM373 458h2v1h-2zM60 459h2v1h-2zM112 459h2v1h-2zM158 459h3v1h-3zM225 459h2v1h-2zM268 459h3v1h-3zM279 459h2v1h-2zM320 459h3v1h-3zM373 459h2v1h-2zM60 460h2v1h-2zM112 460h2v1h-2zM158 460h2v1h-2zM225 460h3v1h-3zM267 460h5v1h-5zM279 460h2v1h-2zM321 460h2v1h-2zM373 460h2v1h-2zM60 461h2v1h-2zM112 461h2v1h-2zM140 461h2v1h-2zM158 461h2v1h-2zM226 461h2v1h-2zM267 461h2v1h-2zM270 461h2v1h-2zM278 461h3v1h-3zM321 461h2v1h-2zM372 461h3v1h-3zM60 462h2v1h-2zM112 462h3v1h-3zM140 462h3v1h-3zM158 462h2v1h-2zM226 462h2v1h-2zM267 462h2v1h-2zM270 462h3v1h-3zM278 462h2v1h-2zM321 462h2v1h-2zM372 462h2v1h-2zM59 463h3v1h-3zM113 463h2v1h-2zM139 463h5v1h-5zM158 463h2v1h-2zM226 463h2v1h-2zM266 463h3v1h-3zM271 463h3v1h-3zM278 463h2v1h-2zM321 463h3v1h-3zM372 463h2v1h-2zM59 464h2v1h-2zM113 464h2v1h-2zM139 464h2v1h-2zM142 464h2v1h-2zM157 464h3v1h-3zM226 464h3v1h-3zM266 464h2v1h-2zM272 464h3v1h-3zM277 464h3v1h-3zM322 464h2v1h-2zM372 464h2v1h-2zM59 465h2v1h-2zM113 465h2v1h-2zM138 465h3v1h-3zM142 465h3v1h-3zM157 465h2v1h-2zM227 465h2v1h-2zM265 465h3v1h-3zM273 465h3v1h-3zM277 465h2v1h-2zM322 465h2v1h-2zM371 465h3v1h-3zM59 466h2v1h-2zM113 466h2v1h-2zM138 466h2v1h-2zM143 466h3v1h-3zM157 466h2v1h-2zM227 466h2v1h-2zM265 466h2v1h-2zM274 466h2v1h-2zM277 466h2v1h-2zM322 466h2v1h-2zM371 466h2v1h-2zM58 467h3v1h-3zM113 467h2v1h-2zM138 467h2v1h-2zM144 467h3v1h-3zM157 467h2v1h-2zM227 467h2v1h-2zM265 467h2v1h-2zM274 467h5v1h-5zM322 467h2v1h-2zM371 467h2v1h-2zM58 468h2v1h-2zM113 468h3v1h-3zM137 468h3v1h-3zM145 468h3v1h-3zM157 468h2v1h-2zM227 468h3v1h-3zM264 468h3v1h-3zM275 468h3v1h-3zM322 468h3v1h-3zM371 468h2v1h-2zM58 469h2v1h-2zM114 469h2v1h-2zM137 469h2v1h-2zM146 469h2v1h-2zM156 469h3v1h-3zM228 469h2v1h-2zM264 469h2v1h-2zM276 469h2v1h-2zM323 469h2v1h-2zM370 469h3v1h-3zM58 470h2v1h-2zM114 470h2v1h-2zM137 470h2v1h-2zM146 470h3v1h-3zM156 470h2v1h-2zM228 470h2v1h-2zM264 470h2v1h-2zM323 470h2v1h-2zM370 470h2v1h-2zM57 471h3v1h-3zM114 471h2v1h-2zM136 471h3v1h-3zM147 471h11v1h-11zM228 471h2v1h-2zM263 471h3v1h-3zM323 471h2v1h-2zM370 471h2v1h-2zM57 472h2v1h-2zM114 472h2v1h-2zM136 472h2v1h-2zM148 472h10v1h-10zM228 472h3v1h-3zM263 472h2v1h-2zM323 472h3v1h-3zM369 472h3v1h-3zM57 473h2v1h-2zM114 473h2v1h-2zM135 473h3v1h-3zM229 473h2v1h-2zM263 473h2v1h-2zM324 473h2v1h-2zM369 473h2v1h-2zM57 474h2v1h-2zM114 474h3v1h-3zM135 474h2v1h-2zM229 474h2v1h-2zM262 474h3v1h-3zM324 474h2v1h-2zM369 474h2v1h-2zM56 475h3v1h-3zM115 475h2v1h-2zM135 475h2v1h-2zM229 475h3v1h-3zM262 475h2v1h-2zM324 475h3v1h-3zM369 475h2v1h-2zM56 476h2v1h-2zM115 476h2v1h-2zM134 476h3v1h-3zM230 476h2v1h-2zM261 476h3v1h-3zM325 476h2v1h-2zM368 476h3v1h-3zM56 477h2v1h-2zM115 477h2v1h-2zM134 477h2v1h-2zM230 477h3v1h-3zM261 477h2v1h-2zM325 477h2v1h-2zM368 477h2v1h-2zM56 478h2v1h-2zM115 478h2v1h-2zM134 478h2v1h-2zM231 478h2v1h-2zM261 478h2v1h-2zM325 478h3v1h-3zM368 478h2v1h-2zM55 479h3v1h-3zM115 479h2v1h-2zM133 479h3v1h-3zM231 479h2v1h-2zM260 479h3v1h-3zM326 479h3v1h-3zM367 479h3v1h-3zM55 480h2v1h-2zM115 480h3v1h-3zM133 480h2v1h-2zM231 480h3v1h-3zM260 480h2v1h-2zM327 480h2v1h-2zM356 480h2v1h-2zM367 480h2v1h-2zM55 481h2v1h-2zM116 481h2v1h-2zM132 481h3v1h-3zM232 481h2v1h-2zM260 481h2v1h-2zM327 481h2v1h-2zM355 481h4v1h-4zM367 481h2v1h-2zM55 482h2v1h-2zM116 482h2v1h-2zM132 482h2v1h-2zM232 482h2v1h-2zM260 482h2v1h-2zM327 482h3v1h-3zM354 482h5v1h-5zM367 482h2v1h-2zM54 483h3v1h-3zM116 483h2v1h-2zM132 483h2v1h-2zM232 483h3v1h-3zM259 483h3v1h-3zM328 483h3v1h-3zM353 483h3v1h-3zM357 483h3v1h-3zM366 483h3v1h-3zM54 484h2v1h-2zM116 484h3v1h-3zM131 484h3v1h-3zM233 484h2v1h-2zM259 484h2v1h-2zM329 484h2v1h-2zM352 484h3v1h-3zM358 484h3v1h-3zM366 484h2v1h-2zM54 485h2v1h-2zM117 485h2v1h-2zM131 485h2v1h-2zM233 485h2v1h-2zM259 485h2v1h-2zM329 485h2v1h-2zM351 485h3v1h-3zM359 485h3v1h-3zM366 485h2v1h-2zM54 486h2v1h-2zM117 486h2v1h-2zM131 486h2v1h-2zM233 486h3v1h-3zM259 486h2v1h-2zM329 486h3v1h-3zM350 486h3v1h-3zM360 486h2v1h-2zM365 486h3v1h-3zM53 487h3v1h-3zM117 487h3v1h-3zM130 487h3v1h-3zM234 487h2v1h-2zM259 487h2v1h-2zM330 487h3v1h-3zM349 487h3v1h-3zM360 487h3v1h-3zM365 487h2v1h-2zM53 488h2v1h-2zM118 488h2v1h-2zM130 488h2v1h-2zM234 488h3v1h-3zM258 488h3v1h-3zM331 488h2v1h-2zM348 488h3v1h-3zM361 488h3v1h-3zM365 488h2v1h-2zM53 489h2v1h-2zM118 489h2v1h-2zM130 489h2v1h-2zM235 489h2v1h-2zM258 489h2v1h-2zM331 489h2v1h-2zM348 489h2v1h-2zM362 489h5v1h-5zM53 490h2v1h-2zM118 490h3v1h-3zM129 490h3v1h-3zM235 490h2v1h-2zM258 490h2v1h-2zM331 490h3v1h-3zM347 490h3v1h-3zM363 490h4v1h-4zM52 491h3v1h-3zM119 491h2v1h-2zM129 491h2v1h-2zM235 491h3v1h-3zM258 491h2v1h-2zM332 491h2v1h-2zM347 491h2v1h-2zM363 491h3v1h-3zM52 492h2v1h-2zM119 492h2v1h-2zM129 492h2v1h-2zM236 492h2v1h-2zM258 492h2v1h-2zM332 492h3v1h-3zM346 492h3v1h-3zM364 492h2v1h-2zM52 493h2v1h-2zM119 493h3v1h-3zM128 493h3v1h-3zM236 493h2v1h-2zM257 493h3v1h-3zM333 493h2v1h-2zM346 493h2v1h-2zM52 494h2v1h-2zM120 494h2v1h-2zM128 494h2v1h-2zM236 494h2v1h-2zM257 494h2v1h-2zM333 494h3v1h-3zM346 494h2v1h-2zM51 495h3v1h-3zM120 495h3v1h-3zM127 495h3v1h-3zM236 495h3v1h-3zM257 495h2v1h-2zM334 495h2v1h-2zM345 495h3v1h-3zM51 496h2v1h-2zM121 496h2v1h-2zM127 496h2v1h-2zM237 496h2v1h-2zM257 496h2v1h-2zM334 496h3v1h-3zM345 496h2v1h-2zM51 497h2v1h-2zM121 497h2v1h-2zM127 497h2v1h-2zM237 497h2v1h-2zM257 497h2v1h-2zM335 497h2v1h-2zM345 497h2v1h-2zM51 498h2v1h-2zM121 498h3v1h-3zM126 498h3v1h-3zM237 498h2v1h-2zM256 498h3v1h-3zM335 498h2v1h-2zM344 498h3v1h-3zM50 499h3v1h-3zM122 499h2v1h-2zM126 499h2v1h-2zM237 499h2v1h-2zM256 499h2v1h-2zM335 499h3v1h-3zM344 499h2v1h-2zM50 500h2v1h-2zM122 500h2v1h-2zM126 500h2v1h-2zM237 500h2v1h-2zM256 500h2v1h-2zM336 500h2v1h-2zM343 500h3v1h-3zM50 501h2v1h-2zM122 501h6v1h-6zM237 501h2v1h-2zM256 501h2v1h-2zM336 501h3v1h-3zM343 501h2v1h-2zM50 502h2v1h-2zM123 502h4v1h-4zM237 502h3v1h-3zM256 502h2v1h-2zM337 502h2v1h-2zM343 502h2v1h-2zM49 503h3v1h-3zM123 503h4v1h-4zM238 503h2v1h-2zM256 503h2v1h-2zM337 503h2v1h-2zM342 503h3v1h-3zM49 504h2v1h-2zM123 504h4v1h-4zM238 504h2v1h-2zM255 504h3v1h-3zM337 504h3v1h-3zM342 504h2v1h-2zM49 505h2v1h-2zM124 505h2v1h-2zM238 505h2v1h-2zM255 505h2v1h-2zM338 505h2v1h-2zM342 505h2v1h-2zM49 506h2v1h-2zM124 506h2v1h-2zM238 506h2v1h-2zM255 506h2v1h-2zM338 506h6v1h-6zM48 507h3v1h-3zM238 507h3v1h-3zM255 507h2v1h-2zM339 507h4v1h-4zM48 508h2v1h-2zM239 508h2v1h-2zM255 508h2v1h-2zM339 508h4v1h-4zM48 509h2v1h-2zM239 509h2v1h-2zM254 509h3v1h-3zM340 509h2v1h-2zM47 510h3v1h-3zM239 510h2v1h-2zM254 510h2v1h-2zM340 510h2v1h-2zM47 511h2v1h-2zM239 511h2v1h-2zM254 511h2v1h-2zM47 512h2v1h-2zM239 512h2v1h-2zM254 512h2v1h-2zM47 513h2v1h-2zM239 513h2v1h-2zM254 513h2v1h-2zM46 514h3v1h-3zM239 514h3v1h-3zM253 514h3v1h-3zM46 515h2v1h-2zM240 515h2v1h-2zM253 515h2v1h-2zM46 516h2v1h-2zM240 516h2v1h-2zM253 516h2v1h-2zM46 517h2v1h-2zM240 517h2v1h-2zM253 517h2v1h-2zM45 518h3v1h-3zM240 518h2v1h-2zM253 518h2v1h-2zM45 519h2v1h-2zM240 519h3v1h-3zM252 519h3v1h-3zM45 520h2v1h-2zM241 520h2v1h-2zM252 520h2v1h-2zM45 521h2v1h-2zM241 521h2v1h-2zM252 521h2v1h-2zM44 522h3v1h-3zM241 522h2v1h-2zM252 522h2v1h-2zM44 523h2v1h-2zM241 523h2v1h-2zM251 523h3v1h-3zM13 524h1v1h-1zM43 524h3v1h-3zM241 524h2v1h-2zM251 524h2v1h-2zM13 525h1v1h-1zM42 525h3v1h-3zM241 525h2v1h-2zM250 525h3v1h-3zM13 526h2v1h-2zM41 526h3v1h-3zM241 526h3v1h-3zM250 526h2v1h-2zM13 527h2v1h-2zM40 527h3v1h-3zM242 527h2v1h-2zM249 527h3v1h-3zM13 528h3v1h-3zM39 528h3v1h-3zM242 528h2v1h-2zM249 528h2v1h-2zM14 529h2v1h-2zM38 529h3v1h-3zM242 529h2v1h-2zM249 529h2v1h-2zM14 530h3v1h-3zM37 530h3v1h-3zM242 530h2v1h-2zM248 530h3v1h-3zM15 531h2v1h-2zM36 531h3v1h-3zM242 531h3v1h-3zM248 531h2v1h-2zM15 532h3v1h-3zM35 532h3v1h-3zM243 532h2v1h-2zM247 532h3v1h-3zM16 533h2v1h-2zM34 533h3v1h-3zM243 533h2v1h-2zM247 533h2v1h-2zM16 534h3v1h-3zM33 534h3v1h-3zM243 534h2v1h-2zM247 534h2v1h-2zM17 535h2v1h-2zM32 535h3v1h-3zM243 535h2v1h-2zM246 535h3v1h-3zM17 536h3v1h-3zM32 536h2v1h-2zM243 536h2v1h-2zM246 536h2v1h-2zM18 537h2v1h-2zM31 537h3v1h-3zM243 537h5v1h-5zM18 538h3v1h-3zM30 538h3v1h-3zM243 538h4v1h-4zM19 539h2v1h-2zM29 539h3v1h-3zM244 539h3v1h-3zM19 540h3v1h-3zM25 540h6v1h-6zM244 540h2v1h-2zM20 541h10v1h-10zM244 541h2v1h-2zM20 542h6v1h-6z" fill="#ff0000" shape-rendering="crispEdges"/>
<path d="M204 412h19v1h-19zM202 413h24v1h-24zM201 414h4v1h-4zM222 414h6v1h-6zM200 415h3v1h-3zM225 415h6v1h-6zM199 416h3v1h-3zM227 416h6v1h-6zM197 417h4v1h-4zM230 417h6v1h-6zM196 418h4v1h-4zM232 418h9v1h-9zM195 419h3v1h-3zM235 419h15v1h-15zM13 420h10v1h-10zM195 420h2v1h-2zM240 420h25v1h-25zM13 421h15v1h-15zM194 421h3v1h-3zM249 421h25v1h-25zM22 422h8v1h-8zM193 422h3v1h-3zM264 422h17v1h-17zM27 423h6v1h-6zM193 423h2v1h-2zM273 423h17v1h-17zM304 423h14v1h-14zM29 424h5v1h-5zM192 424h3v1h-3zM280 424h39v1h-39zM32 425h5v1h-5zM191 425h3v1h-3zM289 425h16v1h-16zM317 425h2v1h-2zM33 426h5v1h-5zM191 426h2v1h-2zM317 426h3v1h-3zM36 427h4v1h-4zM190 427h3v1h-3zM318 427h3v1h-3zM37 428h4v1h-4zM189 428h3v1h-3zM319 428h2v1h-2zM39 429h3v1h-3zM189 429h2v1h-2zM319 429h3v1h-3zM412 429h2v1h-2zM40 430h3v1h-3zM188 430h3v1h-3zM320 430h3v1h-3zM410 430h4v1h-4zM41 431h4v1h-4zM187 431h3v1h-3zM321 431h2v1h-2zM408 431h5v1h-5zM42 432h4v1h-4zM187 432h2v1h-2zM321 432h3v1h-3zM407 432h4v1h-4zM44 433h3v1h-3zM186 433h3v1h-3zM322 433h3v1h-3zM405 433h4v1h-4zM45 434h3v1h-3zM186 434h2v1h-2zM323 434h2v1h-2zM404 434h4v1h-4zM46 435h4v1h-4zM185 435h3v1h-3zM323 435h3v1h-3zM403 435h3v1h-3zM47 436h4v1h-4zM185 436h2v1h-2zM324 436h3v1h-3zM402 436h3v1h-3zM49 437h3v1h-3zM184 437h3v1h-3zM325 437h2v1h-2zM401 437h3v1h-3zM50 438h3v1h-3zM183 438h3v1h-3zM325 438h3v1h-3zM400 438h3v1h-3zM51 439h3v1h-3zM183 439h2v1h-2zM326 439h3v1h-3zM399 439h3v1h-3zM52 440h3v1h-3zM182 440h3v1h-3zM327 440h3v1h-3zM398 440h3v1h-3zM53 441h3v1h-3zM182 441h2v1h-2zM328 441h2v1h-2zM397 441h3v1h-3zM54 442h3v1h-3zM181 442h3v1h-3zM328 442h3v1h-3zM396 442h3v1h-3zM55 443h4v1h-4zM181 443h2v1h-2zM329 443h3v1h-3zM395 443h3v1h-3zM56 444h4v1h-4zM180 444h3v1h-3zM330 444h3v1h-3zM394 444h3v1h-3zM58 445h3v1h-3zM179 445h3v1h-3zM331 445h2v1h-2zM393 445h3v1h-3zM59 446h3v1h-3zM179 446h2v1h-2zM331 446h3v1h-3zM392 446h3v1h-3zM60 447h4v1h-4zM178 447h3v1h-3zM332 447h3v1h-3zM391 447h3v1h-3zM61 448h4v1h-4zM178 448h2v1h-2zM333 448h2v1h-2zM390 448h3v1h-3zM63 449h3v1h-3zM177 449h3v1h-3zM333 449h3v1h-3zM389 449h3v1h-3zM64 450h3v1h-3zM176 450h3v1h-3zM334 450h3v1h-3zM388 450h3v1h-3zM65 451h4v1h-4zM176 451h2v1h-2zM335 451h2v1h-2zM387 451h3v1h-3zM66 452h4v1h-4zM175 452h3v1h-3zM335 452h3v1h-3zM386 452h3v1h-3zM68 453h3v1h-3zM174 453h3v1h-3zM336 453h3v1h-3zM348 453h10v1h-10zM385 453h3v1h-3zM69 454h3v1h-3zM174 454h2v1h-2zM337 454h2v1h-2zM346 454h13v1h-13zM384 454h3v1h-3zM70 455h4v1h-4zM173 455h3v1h-3zM337 455h3v1h-3zM344 455h5v1h-5zM357 455h2v1h-2zM384 455h2v1h-2zM71 456h4v1h-4zM173 456h2v1h-2zM338 456h3v1h-3zM343 456h4v1h-4zM357 456h3v1h-3zM383 456h3v1h-3zM73 457h3v1h-3zM172 457h3v1h-3zM339 457h6v1h-6zM358 457h3v1h-3zM382 457h3v1h-3zM74 458h3v1h-3zM170 458h4v1h-4zM339 458h5v1h-5zM359 458h3v1h-3zM381 458h3v1h-3zM75 459h3v1h-3zM168 459h5v1h-5zM340 459h2v1h-2zM360 459h2v1h-2zM372 459h11v1h-11zM76 460h3v1h-3zM167 460h4v1h-4zM360 460h3v1h-3zM370 460h12v1h-12zM77 461h3v1h-3zM165 461h4v1h-4zM361 461h3v1h-3zM368 461h5v1h-5zM78 462h3v1h-3zM164 462h4v1h-4zM362 462h3v1h-3zM367 462h4v1h-4zM79 463h4v1h-4zM164 463h2v1h-2zM363 463h6v1h-6zM80 464h4v1h-4zM163 464h3v1h-3zM363 464h5v1h-5zM82 465h3v1h-3zM163 465h2v1h-2zM364 465h2v1h-2zM83 466h3v1h-3zM162 466h3v1h-3zM84 467h4v1h-4zM162 467h2v1h-2zM85 468h4v1h-4zM161 468h3v1h-3zM87 469h3v1h-3zM161 469h2v1h-2zM88 470h3v1h-3zM160 470h3v1h-3zM89 471h4v1h-4zM160 471h2v1h-2zM90 472h4v1h-4zM160 472h2v1h-2zM92 473h3v1h-3zM159 473h3v1h-3zM93 474h3v1h-3zM159 474h2v1h-2zM94 475h3v1h-3zM158 475h3v1h-3zM95 476h3v1h-3zM158 476h2v1h-2zM96 477h3v1h-3zM157 477h3v1h-3zM97 478h3v1h-3zM157 478h2v1h-2zM98 479h3v1h-3zM156 479h3v1h-3zM99 480h3v1h-3zM155 480h3v1h-3zM100 481h3v1h-3zM150 481h8v1h-8zM101 482h2v1h-2zM148 482h8v1h-8zM101 483h3v1h-3zM147 483h4v1h-4zM102 484h3v1h-3zM146 484h3v1h-3zM103 485h3v1h-3zM145 485h3v1h-3zM104 486h2v1h-2zM144 486h3v1h-3zM104 487h3v1h-3zM143 487h3v1h-3zM105 488h3v1h-3zM142 488h3v1h-3zM106 489h3v1h-3zM141 489h3v1h-3zM107 490h2v1h-2zM140 490h3v1h-3zM107 491h3v1h-3zM139 491h3v1h-3zM108 492h3v1h-3zM139 492h2v1h-2zM109 493h2v1h-2zM138 493h3v1h-3zM109 494h3v1h-3zM138 494h2v1h-2zM110 495h3v1h-3zM137 495h3v1h-3zM111 496h2v1h-2zM136 496h3v1h-3zM111 497h3v1h-3zM136 497h2v1h-2zM112 498h3v1h-3zM135 498h3v1h-3zM113 499h2v1h-2zM134 499h3v1h-3zM113 500h3v1h-3zM123 500h4v1h-4zM134 500h2v1h-2zM114 501h3v1h-3zM120 501h10v1h-10zM133 501h3v1h-3zM115 502h2v1h-2zM118 502h6v1h-6zM126 502h6v1h-6zM133 502h2v1h-2zM115 503h6v1h-6zM129 503h6v1h-6zM116 504h3v1h-3zM131 504h3v1h-3z" fill="#00ffff" shape-rendering="crispEdges"/>
<path d="M409 408h5v1h-5zM400 409h14v1h-14zM395 410h15v1h-15zM392 411h9v1h-9zM390 412h6v1h-6zM386 413h7v1h-7zM383 414h8v1h-8zM379 415h8v1h-8zM51 416h14v1h-14zM377 416h7v1h-7zM48 417h34v1h-34zM374 417h6v1h-6zM46 418h6v1h-6zM64 418h31v1h-31zM372 418h6v1h-6zM43 419h6v1h-6zM81 419h19v1h-19zM370 419h5v1h-5zM42 420h5v1h-5zM94 420h11v1h-11zM369 420h4v1h-4zM39 421h5v1h-5zM99 421h13v1h-13zM220 421h14v1h-14zM368 421h3v1h-3zM38 422h5v1h-5zM104 422h11v1h-11zM218 422h23v1h-23zM367 422h3v1h-3zM36 423h4v1h-4zM111 423h11v1h-11zM216 423h5v1h-5zM233 423h33v1h-33zM365 423h4v1h-4zM34 424h5v1h-5zM114 424h13v1h-13zM215 424h4v1h-4zM240 424h33v1h-33zM356 424h12v1h-12zM32 425h5v1h-5zM121 425h11v1h-11zM213 425h4v1h-4zM265 425h17v1h-17zM354 425h12v1h-12zM31 426h4v1h-4zM126 426h11v1h-11zM212 426h4v1h-4zM272 426h47v1h-47zM353 426h4v1h-4zM29 427h4v1h-4zM131 427h13v1h-13zM209 427h5v1h-5zM281 427h43v1h-43zM351 427h4v1h-4zM27 428h5v1h-5zM136 428h11v1h-11zM208 428h5v1h-5zM318 428h17v1h-17zM349 428h5v1h-5zM22 429h8v1h-8zM143 429h11v1h-11zM205 429h5v1h-5zM323 429h15v1h-15zM346 429h6v1h-6zM20 430h8v1h-8zM146 430h15v1h-15zM203 430h6v1h-6zM334 430h6v1h-6zM343 430h7v1h-7zM17 431h6v1h-6zM153 431h15v1h-15zM200 431h6v1h-6zM337 431h10v1h-10zM16 432h5v1h-5zM160 432h11v1h-11zM198 432h6v1h-6zM339 432h5v1h-5zM13 433h5v1h-5zM167 433h34v1h-34zM13 434h4v1h-4zM170 434h29v1h-29zM13 435h1v1h-1z" fill="#ffff00" shape-rendering="crispEdges"/>
<polygon points="244.70,272.00 246.52,277.29 252.12,277.39 247.65,280.76 249.28,286.11 244.70,282.90 240.12,286.11 241.75,280.76 237.28,277.39 242.88,277.29" fill="#ffa500"/>
<path d="M253 284 L263 293.7 V301 L256 294.3 V309 H250 V294.3 L243.2 301 V293.7 Z" fill="#ffa500"/>
<path d="M16 42h7l-3.5 4z" fill="#fff" shape-rendering="crispEdges"/>
<text x="28.5" y="47" font-size="9.5" fill="#fff" textLength="51.5" lengthAdjust="spacingAndGlyphs" stroke="#fff" stroke-width="0.15">USDJPY,M5</text>
<text x="86.5" y="47" font-size="9.5" fill="#fff" textLength="32.3" lengthAdjust="spacingAndGlyphs" stroke="#fff" stroke-width="0.15">157.218</text>
<text x="122.6" y="47" font-size="9.5" fill="#fff" textLength="32.3" lengthAdjust="spacingAndGlyphs" stroke="#fff" stroke-width="0.15">157.263</text>
<text x="158.7" y="47" font-size="9.5" fill="#fff" textLength="32.3" lengthAdjust="spacingAndGlyphs" stroke="#fff" stroke-width="0.15">157.201</text>
<text x="194.8" y="47" font-size="9.5" fill="#fff" textLength="32.3" lengthAdjust="spacingAndGlyphs" stroke="#fff" stroke-width="0.15">157.241</text>
<text x="17.3" y="393" font-size="9.5" fill="#fff" textLength="106" lengthAdjust="spacingAndGlyphs" stroke="#fff" stroke-width="0.15">R(9,26,52) 91.7 58.9 85.2</text>
<text x="687.7" y="69" font-size="9.5" fill="#fff" textLength="32.3" lengthAdjust="spacingAndGlyphs" stroke="#fff" stroke-width="0.15">157.255</text>
<text x="687.7" y="103" font-size="9.5" fill="#fff" textLength="32.3" lengthAdjust="spacingAndGlyphs" stroke="#fff" stroke-width="0.15">157.225</text>
<text x="687.7" y="137" font-size="9.5" fill="#fff" textLength="32.3" lengthAdjust="spacingAndGlyphs" stroke="#fff" stroke-width="0.15">157.195</text>
<text x="687.7" y="171" font-size="9.5" fill="#fff" textLength="32.3" lengthAdjust="spacingAndGlyphs" stroke="#fff" stroke-width="0.15">157.165</text>
<text x="687.7" y="205" font-size="9.5" fill="#fff" textLength="32.3" lengthAdjust="spacingAndGlyphs" stroke="#fff" stroke-width="0.15">157.135</text>
<text x="687.7" y="239" font-size="9.5" fill="#fff" textLength="32.3" lengthAdjust="spacingAndGlyphs" stroke="#fff" stroke-width="0.15">157.105</text>
<text x="687.7" y="274" font-size="9.5" fill="#fff" textLength="32.3" lengthAdjust="spacingAndGlyphs" stroke="#fff" stroke-width="0.15">157.075</text>
<text x="687.7" y="308" font-size="9.5" fill="#fff" textLength="32.3" lengthAdjust="spacingAndGlyphs" stroke="#fff" stroke-width="0.15">157.045</text>
<text x="687.7" y="342" font-size="9.5" fill="#fff" textLength="32.3" lengthAdjust="spacingAndGlyphs" stroke="#fff" stroke-width="0.15">157.015</text>
<text x="687.7" y="376" font-size="9.5" fill="#fff" textLength="32.3" lengthAdjust="spacingAndGlyphs" stroke="#fff" stroke-width="0.15">156.985</text>
<rect x="683" y="76" width="41" height="11" fill="#fff" shape-rendering="crispEdges"/>
<text x="687.7" y="85" font-size="9.5" fill="#000" textLength="32.3" lengthAdjust="spacingAndGlyphs">157.241</text>
<text x="686" y="392" font-size="9.5" fill="#fff" textLength="14.5" lengthAdjust="spacingAndGlyphs" stroke="#fff" stroke-width="0.15">120</text>
<text x="685" y="401" font-size="9.5" fill="#fff" textLength="14.5" lengthAdjust="spacingAndGlyphs" stroke="#fff" stroke-width="0.15">100</text>
<text x="684.5" y="417" font-size="9.5" fill="#fff" textLength="9.8" lengthAdjust="spacingAndGlyphs" stroke="#fff" stroke-width="0.15">80</text>
<text x="684.5" y="440" font-size="9.5" fill="#fff" textLength="9.8" lengthAdjust="spacingAndGlyphs" stroke="#fff" stroke-width="0.15">50</text>
<text x="685" y="479" font-size="9.5" fill="#fff" textLength="17.3" lengthAdjust="spacingAndGlyphs" stroke="#fff" stroke-width="0.15">0.00</text>
<text x="684.3" y="518" font-size="9.5" fill="#fff" textLength="12.8" lengthAdjust="spacingAndGlyphs" stroke="#fff" stroke-width="0.15">-50</text>
<text x="684.3" y="541" font-size="9.5" fill="#fff" textLength="12.8" lengthAdjust="spacingAndGlyphs" stroke="#fff" stroke-width="0.15">-80</text>
<text x="685.5" y="550" font-size="9.5" fill="#fff" textLength="17.8" lengthAdjust="spacingAndGlyphs" stroke="#fff" stroke-width="0.15">-100</text>
<text x="12.3" y="566" font-size="9.5" fill="#fff" textLength="46.8" lengthAdjust="spacingAndGlyphs" stroke="#fff" stroke-width="0.15">6 Feb 2026</text>
<text x="76.3" y="566" font-size="9.5" fill="#fff" textLength="49.6" lengthAdjust="spacingAndGlyphs" stroke="#fff" stroke-width="0.15">6 Feb 20:20</text>
<text x="140.3" y="566" font-size="9.5" fill="#fff" textLength="49.6" lengthAdjust="spacingAndGlyphs" stroke="#fff" stroke-width="0.15">6 Feb 21:00</text>
<text x="204.3" y="566" font-size="9.5" fill="#fff" textLength="49.6" lengthAdjust="spacingAndGlyphs" stroke="#fff" stroke-width="0.15">6 Feb 21:40</text>
<text x="268.3" y="566" font-size="9.5" fill="#fff" textLength="49.6" lengthAdjust="spacingAndGlyphs" stroke="#fff" stroke-width="0.15">6 Feb 22:20</text>
<text x="332.3" y="566" font-size="9.5" fill="#fff" textLength="49.6" lengthAdjust="spacingAndGlyphs" stroke="#fff" stroke-width="0.15">6 Feb 23:00</text>
<text x="396.3" y="566" font-size="9.5" fill="#fff" textLength="49.6" lengthAdjust="spacingAndGlyphs" stroke="#fff" stroke-width="0.15">6 Feb 23:40</text>
</svg></body></html>
